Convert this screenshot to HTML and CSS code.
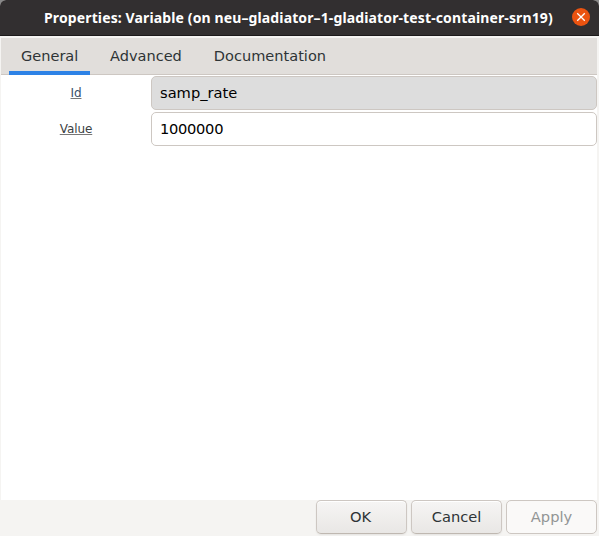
FILE: index.html
```html
<!DOCTYPE html>
<html lang="en">
<head>
<meta charset="utf-8">
<title>Properties: Variable</title>
<link rel="stylesheet" href="styles.css">
</head>
<body>
<div class="window">
  <header class="titlebar">
    <h1 class="title">Properties: Variable (on neu–gladiator–1-gladiator-test-container-srn19)</h1>
    <button class="close" aria-label="Close"><svg width="18" height="18" viewBox="0 0 18 18"><path d="M5.7 5.7l6.6 6.6M12.3 5.7l-6.6 6.6" stroke="#fff" stroke-width="1.3" stroke-linecap="square"/></svg></button>
  </header>
  <main class="notebook">
    <nav class="tabs">
      <a class="tab active">General</a>
      <a class="tab">Advanced</a>
      <a class="tab">Documentation</a>
    </nav>
    <form class="form">
      <label class="label link" for="id">Id</label>
      <input class="entry readonly" id="id" value="samp_rate" readonly>
      <label class="label" for="value">Value</label>
      <input class="entry number" id="value" value="1000000">
    </form>
  </main>
  <footer class="actions">
    <button class="btn ok">OK</button>
    <button class="btn">Cancel</button>
    <button class="btn" disabled>Apply</button>
  </footer>
</div>
</body>
</html>
```
FILE: styles.css
```css
* { box-sizing: border-box; }
body {
  margin: 0;
  background: #888;
  font: 14.67px/20px "DejaVu Sans", sans-serif;
  color: #2e3436;
}
.window {
  width: 599px;
  height: 536px;
  display: flex;
  flex-direction: column;
  background: #f5f4f2;
  border-radius: 6px 6px 0 0;
  overflow: hidden;
}
.titlebar {
  height: 36px;
  flex: none;
  display: flex;
  align-items: center;
  padding: 0 9px 1px 44px;
  background: #322f30;
  border-bottom: 1px solid #1c1a1b;
}
.title {
  flex: 1;
  margin: 0;
  padding-top: 2px;
  font: bold 14px/20px "Noto Sans", sans-serif;
  letter-spacing: 0.125px;
  color: #fff;
  white-space: nowrap;
}
.close {
  width: 18px;
  height: 18px;
  padding: 0;
  border: 0;
  border-radius: 50%;
  background: #eb5310;
  display: flex;
}
.notebook {
  flex: 1;
  margin: 2px 2px 0 1px;
  background: #fff;
}
.tabs {
  display: flex;
  height: 37px;
  padding-left: 8px;
  background: #e1dedb;
  border-bottom: 1px solid #cdc7c2;
}
.tab {
  height: 37px;
  padding: 8px 12px 0;
  margin-right: 8px;
  font-size: 14.55px;
}
.tab.active {
  width: 81px;
  border-bottom: 4px solid #2d82e6;
}
.form {
  display: grid;
  grid-template-columns: 150px 1fr;
  row-gap: 2px;
  padding-top: 1px;
}
.label {
  font-size: 12px;
  line-height: 34px;
  letter-spacing: -0.1px;
  text-align: center;
  text-decoration: underline;
  text-decoration-color: #777;
  color: #3c4143;
}
.link { color: #38516b; }
.entry {
  height: 34px;
  min-width: 0;
  padding: 0 8px 2px;
  border: 1px solid #cdc7c2;
  border-radius: 5px;
  background: #fff;
  color: #000;
  font: inherit;
  outline: 0;
}
.readonly { background: #ddd; }
.number { letter-spacing: -0.3px; }
.actions {
  height: 36px;
  flex: none;
  display: flex;
  justify-content: flex-end;
  gap: 4px;
  padding-right: 2px;
}
.btn {
  width: 91px;
  height: 34px;
  padding: 0;
  border: 1px solid #cdc7c2;
  border-bottom-color: #bfb8b1;
  border-radius: 5px;
  background: linear-gradient(#f6f5f4, #e9e7e5);
  box-shadow: inset 0 1px #fff, 0 1px 2px rgba(0,0,0,.07);
  color: #2e3436;
  font: inherit;
}
.ok { padding-right: 2px; }
.btn:disabled {
  background: #faf9f8;
  border-color: #cdc7c2;
  box-shadow: none;
  color: #929595;
}
```
